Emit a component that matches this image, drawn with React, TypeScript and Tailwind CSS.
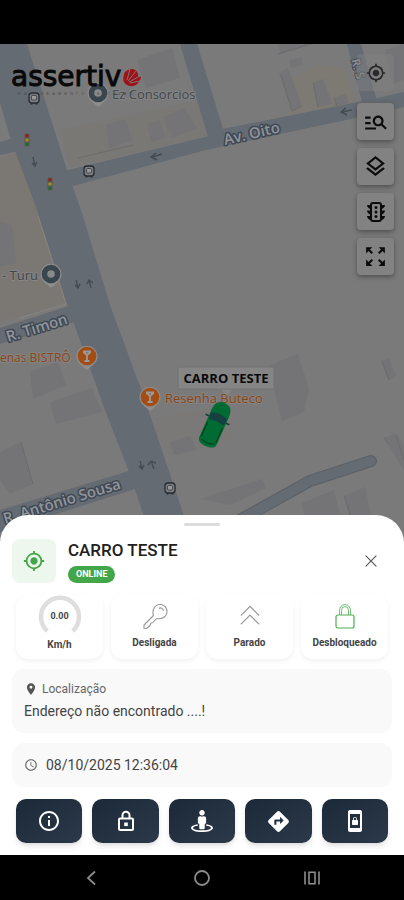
import type { ReactNode } from 'react'
import {
  MdAccessTime,
  MdDirections,
  MdInfoOutline,
  MdLocationOn,
  MdManageSearch,
  MdMyLocation,
  MdOutlineLayers,
  MdScreenLockPortrait,
  MdZoomOutMap,
} from 'react-icons/md'
import { FaStreetView } from 'react-icons/fa'
import { PiCaretDoubleUpLight, PiX } from 'react-icons/pi'

const mapTools = [
  { label: 'Pesquisar', icon: <MdManageSearch size={26} /> },
  { label: 'Camadas', icon: <MdOutlineLayers size={25} /> },
  { label: 'Trânsito', icon: <TrafficIcon /> },
  { label: 'Expandir', icon: <MdZoomOutMap size={25} /> },
]

const actions = [
  { label: 'Informações', icon: <MdInfoOutline size={24} /> },
  { label: 'Bloquear', icon: <PadlockIcon /> },
  { label: 'Street view', icon: <FaStreetView size={22} /> },
  { label: 'Rotas', icon: <MdDirections size={25} /> },
  { label: 'Bloqueio de tela', icon: <MdScreenLockPortrait size={24} /> },
]

function TrafficIcon() {
  return (
    <svg viewBox="0 0 24 24" className="size-6" fill="none" stroke="currentColor" strokeWidth="2">
      <rect x="7" y="3" width="10" height="18" rx="2" />
      <path d="M3 5H7V9C5 9 3 7 3 5ZM3 10.500H7V14.500C5 14.500 3 12.500 3 10.500ZM3 16H7V20C5 20 3 18 3 16ZM21 5H17V9C19 9 21 7 21 5ZM21 10.500H17V14.500C19 14.500 21 12.500 21 10.500ZM21 16H17V20C19 20 21 18 21 16Z" fill="currentColor" stroke="none" />
      <g fill="currentColor" stroke="none">
        <circle cx="12" cy="7.500" r="1.500" />
        <circle cx="12" cy="12" r="1.500" />
        <circle cx="12" cy="16.500" r="1.500" />
      </g>
    </svg>
  )
}

function PadlockIcon() {
  return (
    <svg viewBox="0 0 24 24" className="size-6" fill="none" stroke="currentColor" strokeWidth="2">
      <rect x="5" y="9.500" width="14" height="11.500" rx="1" />
      <path d="M8.500 9V6.200A3.500 3.500 0 0 1 15.500 6.200V9" />
      <rect x="10.200" y="13.500" width="3.600" height="3.600" fill="currentColor" stroke="none" />
    </svg>
  )
}

function KeyIcon() {
  return (
    <svg viewBox="0 0 28 28" className="size-7" fill="none" stroke="#999" strokeWidth="1.100" strokeLinejoin="round">
      <path d="M12.500 13.500C10.500 8 14 2.500 19 2.500C25.500 2.500 28 10 24 14.500C21.500 17 18 17 15.500 16.500L12 20.500L10 21L9 23.500L5.500 26.500H3V23Z" />
      <path d="M18 6.500C19.500 5 22 6.500 22.500 9" />
    </svg>
  )
}

function LockIcon() {
  return (
    <svg viewBox="0 0 24 28" className="h-7 w-6" fill="none" stroke="#4caf50" strokeWidth="1.200">
      <rect x="3" y="13" width="18" height="13" rx="2" />
      <path d="M6.500 13V8.500A5.500 6 0 0 1 17.500 8.500V13M8.500 13V8.500A3.500 4 0 0 1 15.500 8.500V13" strokeWidth="0.800" />
    </svg>
  )
}

function Pin({ x, y, color, food }: { x: number; y: number; color: string; food?: boolean }) {
  return (
    <g transform={`translate(${x} ${y})`}>
      <path d="M0 14 L-7 8 A10.5 10.5 0 1 1 7 8 Z" fill="#8d8d8d" />
      <circle r="9.300" fill={color} />
      {food ? (
        <path d="M-4 -4.500H4M-3.500 -4L0 -1L3.500 -4M0 -2V5M-2.500 5H2.500" fill="none" stroke="#999" strokeWidth="1.800" />
      ) : (
        <circle r="3.800" fill="#8a8a8a" />
      )}
    </g>
  )
}

function BusStop({ x, y }: { x: number; y: number }) {
  return (
    <g transform={`translate(${x} ${y})`}>
      <rect x="-5" y="-5" width="10" height="10" rx="3" fill="#7c8086" stroke="#23282f" strokeWidth="1.300" />
      <rect x="-2.500" y="-2.500" width="5" height="4.500" rx="1" fill="#999" stroke="#2f343a" strokeWidth="0.800" />
      <path d="M-3.500 6h2M1.500 6h2" stroke="#23282f" strokeWidth="1.200" />
    </g>
  )
}

function TrafficLight({ x, y }: { x: number; y: number }) {
  return (
    <g transform={`translate(${x} ${y})`}>
      <rect x="-2.500" y="-6.500" width="5" height="13" rx="1" fill="#5c5a52" />
      <circle cy="-4.200" r="1.800" fill="#8e2420" />
      <circle r="1.800" fill="#a38a1c" />
      <circle cy="4.200" r="1.800" fill="#1f6b33" />
    </g>
  )
}

function StreetName({ x, y, angle, children }: { x: number; y: number; angle: number; children: string }) {
  return (
    <text
      transform={`translate(${x} ${y}) rotate(${angle})`}
      className="font-['Open_Sans'] text-[15px] font-semibold"
      fill="#92959a"
      stroke="#3f4855"
      strokeWidth="3"
      strokeLinejoin="round"
      paintOrder="stroke"
    >
      {children}
    </text>
  )
}

function StreetMap() {
  return (
    <svg
      viewBox="0 44 404 499"
      preserveAspectRatio="xMidYMin slice"
      className="absolute inset-0 h-full w-full"
      role="img"
      aria-label="Mapa"
    >
      <rect y="44" width="404" height="500" fill="#7a7a7a" />

      {/* blocks */}
      <path d="M0 158L22 150L68 303L0 322Z" fill="#7b7873" />
      <path d="M60 130L200 100L209 135L70 168Z" fill="#7a7875" />
      <path d="M286 82L318 64L345 68L355 102L290 116Z" fill="#7d7973" />
      <path d="M145 420L215 408L232 440L170 456Z" fill="#7b7977" />

      {/* buildings */}
      <g fill="#747476">
        <path d="M137 60L172 48L180 78L146 88Z" />
        <path d="M106 125L126 119L132 140L109 148Z" />
        <path d="M147 124L160 120L165 138L151 142ZM163 117L184 108L197 128L172 138Z" />
        <path d="M279 73L288 68L302 106L292 111Z" />
        <path d="M313 83L323 79L332 104L318 107ZM334 98L345 94L349 103L336 106Z" />
        <path d="M289 61L301 57L303 65L291 68ZM278 44H311L281 54Z" />
        <path d="M268 366L298 354L309 389L304 412L282 421Z" />
        <path d="M170 442L190 436L197 450L174 455Z" />
        <path d="M0 222L12 225L16 263L0 267Z" />
        <path d="M30 372L58 362L66 385L33 399Z" />
        <path d="M50 402L92 388L102 412L56 424Z" />
        <path d="M0 452L21 442L33 484L10 494L0 480Z" />
        <path d="M302 503L334 490L341 520H305ZM344 496L365 487L372 520H350Z" />
        <path d="M384 438L396 433L404 445V470Z" />
        <path d="M381 361L389 358L396 376L389 380Z" />
        <path d="M200 499L262 479L266 488L230 505Z" />
        <path d="M0 44H4L0 52ZM385 50L404 44V80L392 84Z" />
      </g>
      <g fill="none" stroke="#67686b" strokeWidth="0.800">
        <path d="M278 54L311 44M281 75L292 111L302 106M313 83L318 107" />
        <path d="M382 361L389 380M384 438L388 444M396 436L404 460M21 442L33 484" />
        <path d="M344 496L351 516M334 98L337 106M78 158L133 145" />
        <path d="M38 216L66 304L20 318" stroke="#8a8884" />
      </g>

      {/* streets */}
      <g fill="#656b72">
        <path d="M0 44H27L67 170L82 213L110 305L145 400L187 525H147L129 472L105 410L68 307L37 210L11 140L0 103Z" />
        <path d="M64 171L209 136L222 129L363 101L404 92V107L355 118L202 151L73 186Z" />
        <path d="M180 44H197L224 132L209 140Z" />
        <path d="M347 44H361L377 101L363 106Z" />
        <path d="M0 142L14 138L19 151L0 155Z" />
        <path d="M0 328L72 305L78 321L0 344Z" />
        <path d="M0 510L132 470L138 488L50 516L0 532Z" />
      </g>
      <path d="M238 521L310 481L371 461" fill="none" stroke="#5b6168" strokeWidth="12" strokeLinecap="round" strokeLinejoin="round" />
      <path d="M238 521L310 481L371 461" fill="none" stroke="#656b72" strokeWidth="10" strokeLinecap="round" strokeLinejoin="round" />

      {/* traffic direction */}
      <g fill="none" stroke="#454b53" strokeWidth="1.400">
        <path d="M162 154L152 157M156 153L151 157L157 160M352 110L342 112M346 108L341 112L347 115" />
        <path d="M33 157L35 166M32 163L35 166L37 162M76 280L78 288M75 285L78 288L80 284M91 288L89 280M87 284L89 280L93 283" />
        <path d="M140 461L142 469M139 466L142 469L144 465M154 469L151 461M148 465L151 461L156 463" />
      </g>

      <StreetName x={225} y={145} angle={-13}>Av. Oito</StreetName>
      <StreetName x={8} y={342} angle={-17}>R. Timon</StreetName>
      <StreetName x={5} y={524} angle={-17}>R. Antônio Sousa</StreetName>
      <text transform="translate(351 60) rotate(74)" className="font-['Open_Sans'] text-[12px] font-semibold" fill="#8f9296" stroke="#3f4855" strokeWidth="2" paintOrder="stroke">R. S</text>

      <BusStop x={34} y={98} />
      <BusStop x={89} y={171} />
      <BusStop x={170} y={488} />
      <TrafficLight x={27} y={140} />
      <TrafficLight x={50} y={184} />

      <Pin x={98} y={93} color="#39464d" />
      <Pin x={51} y={274} color="#39464d" />
      <Pin x={87} y={356} color="#a34d14" food />
      <Pin x={150} y={397} color="#a34d14" food />

      <g className="font-['Open_Sans'] text-[13px]" stroke="#848484" strokeWidth="2" strokeLinejoin="round" paintOrder="stroke">
        <text x="112" y="99" fill="#41464b">Ez Consorcios</text>
        <text x="2" y="280" fill="#41464b">- Turu</text>
        <text x="0" y="362" fill="#8a4414" className="text-[12px]">enas BISTRÔ</text>
        <text x="165" y="403" fill="#8a4414">Resenha Buteco</text>
      </g>

      {/* vehicle */}
      <g transform="translate(215 425) rotate(24)">
        <path d="M-13 -6H-9M9 -6H13" stroke="#12383a" strokeWidth="1.500" />
        <path d="M-9.500 -12C-9.500 -20 -7 -24 0 -24S9.500 -20 9.500 -12V17C9.500 21 6 23 0 23S-9.500 21 -9.500 17Z" fill="#006b32" />
        <path d="M-9 -10Q0 -14 9 -10L8 -3Q0 -5 -8 -3Z" fill="#173f42" />
        <path d="M-8 0V16M8 0V16M-7 18Q0 21 7 18" fill="none" stroke="#00421f" strokeWidth="1.200" />
      </g>
      <path d="M220 388H234L227 396Z" fill="#858585" />
      <rect x="178" y="367" width="96" height="22" rx="1" fill="#858585" stroke="#727272" />
      <text x="226" y="383" textAnchor="middle" className="font-['Open_Sans'] text-[13px] font-bold" fill="#090909">CARRO TESTE</text>

      {/* brand */}
      <text x="11" y="86" className="font-['DejaVu_Sans'] text-[28px]" fill="#090909" stroke="#090909" strokeWidth="1">assertiv</text>
      <text x="18" y="95" className="font-['Liberation_Sans'] text-[4px] tracking-[3px]" fill="#4c4c4c">RASTREAMENTO VEICULAR</text>
      <path d="M128 70C133 67 139 71 138 76L141 77C140 83 135 87 130 86C124 85 122 80 124 75C124 72 126 71 128 70Z" fill="#a01219" />
      <path d="M127 80L130 69M128 81L136 71M129 82L140 76M130 83L140 81" stroke="#777" strokeWidth="1" />
    </svg>
  )
}

function StatusCard({ label, children }: { label: string; children: ReactNode }) {
  return (
    <div className="flex h-16 flex-1 flex-col items-center justify-between rounded-xl bg-white pb-[10px] shadow-[0_2px_5px_rgba(0,0,0,0.06)]">
      <div className="flex h-11 items-center justify-center">{children}</div>
      <span className="text-[10px] leading-3 font-bold text-[#444]">{label}</span>
    </div>
  )
}

function Gauge() {
  return (
    <div className="grid place-items-center">
      <svg viewBox="0 0 44 44" className="col-start-1 row-start-1 size-11">
        <path d="M9.300 36A19 19 0 1 1 34.700 36" fill="none" stroke="#dedede" strokeWidth="4.500" />
      </svg>
      <span className="col-start-1 row-start-1 text-[9px] font-bold text-[#444]">0.00</span>
    </div>
  )
}

function VehicleSheet() {
  return (
    <section className="relative -mt-7 rounded-t-[28px] bg-white pt-2 pb-3">
      <div className="mx-auto h-[3px] w-9 rounded-full bg-[#dcdcdc]" />
      <header className="mt-3 flex items-center gap-3 px-3">
        <div className="flex size-11 items-center justify-center rounded-lg bg-[#edf7ee] text-[#43a648]">
          <MdMyLocation size={22} />
        </div>
        <div className="flex flex-1 flex-col items-start gap-1">
          <h1 className="text-[17px] leading-6 font-medium text-[#202020]">CARRO TESTE</h1>
          <span className="rounded-full bg-[#43a648] px-2 text-[9px] leading-[17px] font-bold text-white">ONLINE</span>
        </div>
        <button type="button" aria-label="Fechar" className="p-3 text-[#555]">
          <PiX size={18} />
        </button>
      </header>

      <div className="mt-3 flex gap-2 px-4">
        <StatusCard label="Km/h"><Gauge /></StatusCard>
        <StatusCard label="Desligada"><KeyIcon /></StatusCard>
        <StatusCard label="Parado"><PiCaretDoubleUpLight size={28} color="#999" /></StatusCard>
        <StatusCard label="Desbloqueado"><LockIcon /></StatusCard>
      </div>

      <div className="mx-3 mt-[10px] rounded-xl bg-[#f9f9f9] px-3 pt-3 pb-3">
        <div className="flex items-center gap-1 text-[12px] leading-4 text-[#666]">
          <MdLocationOn size={14} color="#555" />
          Localização
        </div>
        <p className="mt-1 text-[14px] leading-5 text-[#444]">Endereço não encontrado ....!</p>
      </div>

      <div className="mx-3 mt-[10px] flex h-11 items-center gap-2 rounded-xl bg-[#f9f9f9] px-3 text-[14px] text-[#444]">
        <MdAccessTime size={14} color="#666" />
        08/10/2025 12:36:04
      </div>

      <div className="mt-3 flex gap-[10px] px-4">
        {actions.map(a => (
          <button
            key={a.label}
            type="button"
            aria-label={a.label}
            className="flex h-11 flex-1 items-center justify-center rounded-[10px] bg-linear-to-br from-[#1c2938] to-[#2b394a] text-white shadow-md"
          >
            {a.icon}
          </button>
        ))}
      </div>
    </section>
  )
}

export default function App() {
  return (
    <div className="flex min-h-screen flex-col bg-black font-[Roboto,sans-serif]">
      <div className="h-11" />
      <main className="flex flex-1 flex-col">
        <div className="relative flex flex-1 justify-end">
          <StreetMap />
          <nav className="relative flex flex-col gap-2 p-[10px] text-[#0b0b0b]">
            <button type="button" aria-label="Minha localização" className="mb-1 flex size-[37px] items-center justify-center rounded-sm bg-[#808080]/50 text-[#292929]">
              <MdMyLocation size={20} />
            </button>
            {mapTools.map(t => (
              <button
                key={t.label}
                type="button"
                aria-label={t.label}
                className="flex size-[37px] items-center justify-center rounded-sm bg-[#828282] shadow-[0_2px_5px_rgba(0,0,0,0.35)]"
              >
                {t.icon}
              </button>
            ))}
          </nav>
        </div>
        <VehicleSheet />
      </main>
      <nav className="grid h-[45px] grid-cols-[1fr_auto_1fr] items-center gap-[92px] text-[#8c8c8c]">
        <button type="button" aria-label="Voltar" className="justify-self-end">
          <svg viewBox="0 0 18 18" className="size-[18px]" fill="none" stroke="currentColor" strokeWidth="1.800">
            <path d="M12 2.500L5 9L12 15.500" />
          </svg>
        </button>
        <button type="button" aria-label="Início">
          <svg viewBox="0 0 18 18" className="size-[18px]" fill="none" stroke="currentColor" strokeWidth="1.800">
            <circle cx="9" cy="9" r="7" />
          </svg>
        </button>
        <button type="button" aria-label="Recentes" className="justify-self-start">
          <svg viewBox="0 0 18 18" className="size-[18px]" fill="none" stroke="currentColor" strokeWidth="1.600">
            <path d="M2 2.500V15.500M16 2.500V15.500M6 3.300H12V14.700H6Z" />
          </svg>
        </button>
      </nav>
    </div>
  )
}
